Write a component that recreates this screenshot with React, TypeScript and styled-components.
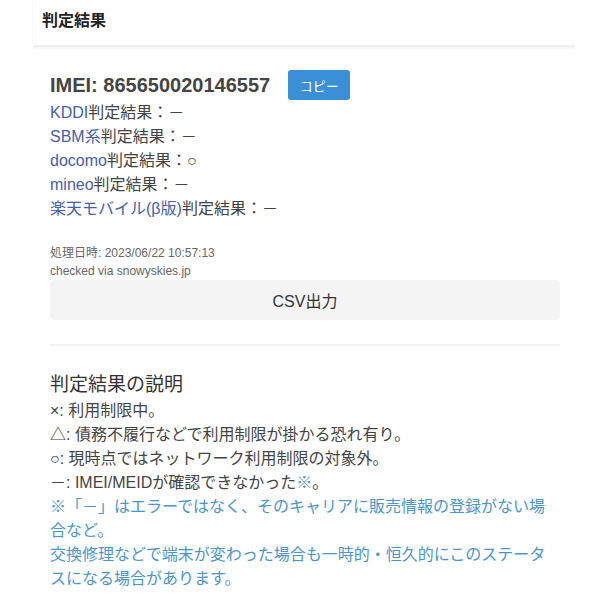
import React from 'react';
import styled, {createGlobalStyle} from 'styled-components';

const Global = createGlobalStyle`
  html, body {
    margin: 0;
    padding: 0;
    background: #fff;
  }
  body {
    font-family: "Liberation Sans", Arial, "Noto Sans CJK JP", sans-serif;
    color: #333;
  }
`

const Panel = styled.section`
  margin-left: 32px;
  width: 543px;
`

const PanelHead = styled.header`
  height: 45px;
  box-sizing: border-box;
  padding: 11px 9px 0;
  border-left: 1px solid #fafafa;
  position: relative;
  >h2{
    margin: 0;
    font-size: 16px;
    font-weight: bold;
    line-height: 20px;
    color: #222;
  }
  &::after{
    content: '';
    position: absolute;
    left: 0;
    right: 0;
    bottom: -5px;
    height: 5px;
    background: linear-gradient(#ececec, #fff);
  }
`

const PanelBody = styled.div`
  padding: 24px 15px 0 18px;
`

const ImeiRow = styled.div`
  display: flex;
  align-items: center;
  height: 32px;
  >h3{
    margin: 0;
    font-size: 20px;
    font-weight: bold;
    color: #444;
  }
`

const CopyButton = styled.button`
  margin-left: 18px;
  width: 62px;
  height: 30px;
  border: none;
  border-radius: 3px;
  background: #3b8fd7;
  color: #fff;
  font-family: inherit;
  font-size: 13px;
`

const Results = styled.ul`
  list-style: none;
  margin: 0;
  padding: 0;
  font-size: 16px;
  line-height: 24px;
  color: #444;
  >li>a{
    color: #4660a9;
    text-decoration: none;
  }
`

const Meta = styled.p`
  margin: 23px 0 0;
  font-size: 12px;
  line-height: 18px;
  color: #666;
`

const CsvButton = styled.button`
  display: block;
  width: 100%;
  height: 40px;
  margin-top: 0;
  border: none;
  border-radius: 4px;
  background: #f4f4f4;
  color: #333;
  font-family: inherit;
  font-size: 16px;
`

const Rule = styled.hr`
  margin: 24px 0 0;
  border: none;
  border-top: 2px solid #f2f2f2;
`

const Explain = styled.div`
  padding-top: 26px;
  font-size: 16px;
  line-height: 24px;
  color: #444;
  >h3{
    margin: 0 0 1px;
    font-size: 19px;
    font-weight: normal;
    line-height: 26px;
    color: #333;
  }
  >p{
    margin: 0;
  }
`

const Note = styled.span`
  color: #4a96cc;
`

const NoteBlock = styled.p`
  margin: 0;
  color: #4a96cc;
`

const carriers = [
  {name: 'KDDI', mark: '－'},
  {name: 'SBM系', mark: '－'},
  {name: 'docomo', mark: '○'},
  {name: 'mineo', mark: '－'},
  {name: '楽天モバイル(β版)', mark: '－'},
];

export default function App() {
  return (
    <>
      <Global/>
      <Panel>
        <PanelHead><h2>判定結果</h2></PanelHead>
        <PanelBody>
          <ImeiRow>
            <h3>IMEI: 865650020146557</h3>
            <CopyButton>コピー</CopyButton>
          </ImeiRow>
          <Results>
            {carriers.map((c) => <li key={c.name}><a href="#">{c.name}</a>判定結果：{c.mark}</li>)}
          </Results>
          <Meta>処理日時: 2023/06/22 10:57:13<br/>checked via snowyskies.jp</Meta>
          <CsvButton>CSV出力</CsvButton>
          <Rule/>
          <Explain>
            <h3>判定結果の説明</h3>
            <p>×: 利用制限中。</p>
            <p>△: 債務不履行などで利用制限が掛かる恐れ有り。</p>
            <p>○: 現時点ではネットワーク利用制限の対象外。</p>
            <p>－: IMEI/MEIDが確認できなかった<Note>※</Note>。</p>
            <NoteBlock>※「－」はエラーではなく、そのキャリアに販売情報の登録がない場合など。</NoteBlock>
            <NoteBlock>交換修理などで端末が変わった場合も一時的・恒久的にこのステータスになる場合があります。</NoteBlock>
          </Explain>
        </PanelBody>
      </Panel>
    </>
  );
}
